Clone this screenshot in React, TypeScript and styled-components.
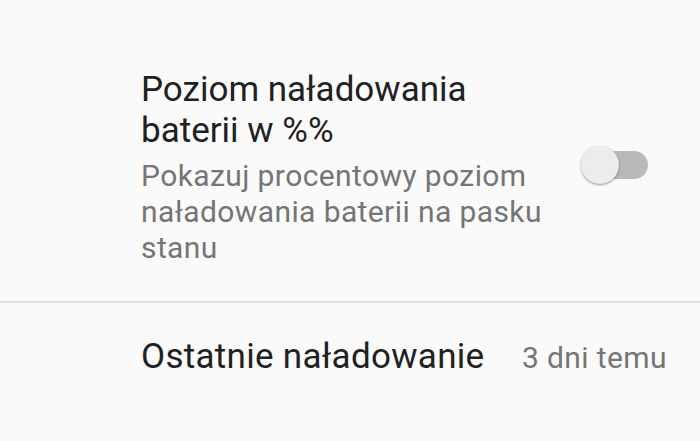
import React, { useState } from "react";
import styled, { createGlobalStyle } from "styled-components";

const GlobalStyle = createGlobalStyle`
  html, body {
    margin: 0;
    padding: 0;
    background: #fafafa;
    font-family: Roboto, "Noto Sans", sans-serif;
  }
`;

const Screen = styled.div`
  width: 700px;
  height: 441px;
  background: #fafafa;
  overflow: hidden;
`;

const SwitchRow = styled.div`
  display: flex;
  align-items: center;
  padding: 69px 52px 35px 141px;
`;

const TextColumn = styled.div`
  flex: 1;
  min-width: 0;
`;

const Title = styled.div`
  font-size: 35px;
  line-height: 41px;
  color: #212121;
`;

const Summary = styled.div`
  margin-top: 7px;
  font-size: 30px;
  line-height: 36px;
  letter-spacing: 0.4px;
  color: #757575;
`;

const Divider = styled.div`
  height: 2px;
  background: #e0e0e0;
`;

const InfoRow = styled.div`
  display: flex;
  align-items: baseline;
  justify-content: space-between;
  padding: 33px 33px 0 141px;
`;

const Label = styled.span`
  font-size: 35px;
  line-height: 41px;
  letter-spacing: 0.3px;
  color: #212121;
`;

const Value = styled.span`
  font-size: 30px;
  letter-spacing: 0.4px;
  color: #757575;
`;

const Track = styled.button<{ $on: boolean }>`
  position: relative;
  flex: none;
  width: 66px;
  height: 28px;
  margin-left: 28px;
  margin-top: -6px;
  padding: 0;
  border: none;
  border-radius: 14px;
  background: ${(p) => (p.$on ? "#80cbc4" : "#b9b9b9")};
  cursor: pointer;
`;

const Thumb = styled.span<{ $on: boolean }>`
  position: absolute;
  top: -5px;
  left: ${(p) => (p.$on ? "28px" : "-1px")};
  width: 38px;
  height: 38px;
  border-radius: 50%;
  background: ${(p) => (p.$on ? "#009688" : "#ececec")};
  box-shadow: 0 1px 3px rgba(0, 0, 0, 0.3), 0 1px 1px rgba(0, 0, 0, 0.12);
  transition: left 0.2s;
`;

const App: React.FC = () => {
  const [showPercent, setShowPercent] = useState(false);

  return (
    <Screen>
      <GlobalStyle />
      <SwitchRow>
        <TextColumn>
          <Title>Poziom naładowania baterii w %%</Title>
          <Summary>Pokazuj procentowy poziom naładowania baterii na pasku stanu</Summary>
        </TextColumn>
        <Track $on={showPercent} onClick={() => setShowPercent(!showPercent)}>
          <Thumb $on={showPercent} />
        </Track>
      </SwitchRow>
      <Divider />
      <InfoRow>
        <Label>Ostatnie naładowanie</Label>
        <Value>3 dni temu</Value>
      </InfoRow>
    </Screen>
  );
};

export default App;
